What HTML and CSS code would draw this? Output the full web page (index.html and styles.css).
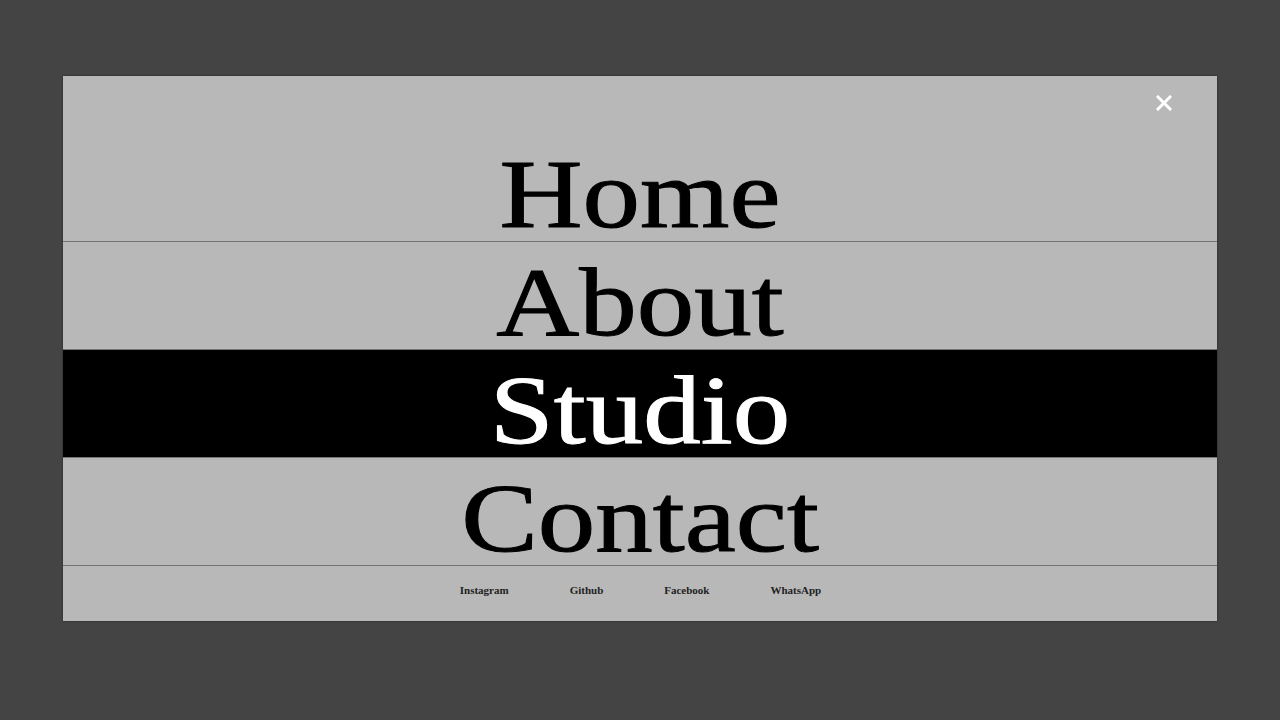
FILE: index.html
```html
<!DOCTYPE html>
<html lang="en">
<head>
<meta charset="utf-8">
<title>Menu</title>
<link rel="stylesheet" href="styles.css">
</head>
<body>
<div class="panel">
  <button class="close" aria-label="Close">
    <svg width="16" height="16" viewBox="0 0 16 16"><path d="M2 2 L14 14 M14 2 L2 14" stroke="#fff" stroke-width="3" stroke-linecap="square" fill="none"/></svg>
  </button>
  <ul class="menu">
    <li class="item"><a href="#">Home</a></li>
    <li class="item"><a href="#">About</a></li>
    <li class="item active"><a href="#">Studio</a></li>
    <li class="item"><a href="#">Contact</a></li>
  </ul>
  <div class="social">
    <a href="#">Instagram</a>
    <a href="#">Github</a>
    <a href="#">Facebook</a>
    <a href="#">WhatsApp</a>
  </div>
</div>
</body>
</html>
```
FILE: styles.css
```css
html, body {
  margin: 0;
  padding: 0;
  background: #444444;
  height: 100%;
}
body {
  font-family: "Liberation Serif", "Times New Roman", serif;
}
.panel {
  position: relative;
  box-sizing: border-box;
  width: 1154px;
  height: 545px;
  margin: 76px 0 0 63px;
  background: #b8b8b8;
  box-shadow: 0 0 2px rgba(0,0,0,0.5);
  padding-top: 58px;
}
.close {
  position: absolute;
  top: 19px;
  right: 45px;
  width: 16px;
  height: 16px;
  padding: 0;
  border: 0;
  background: none;
  display: flex;
}
.menu {
  list-style: none;
  margin: 0;
  padding: 0;
}
.item {
  text-align: center;
  font-size: 115px;
  line-height: 92px;
  height: 92px;
  padding-top: 15px;
  border-bottom: 1px solid #747474;
}
.item a {
  display: inline-block;
  color: #000;
  text-decoration: none;
  -webkit-text-stroke: 1.2px #000;
  transform: scaleY(0.855);
  transform-origin: 50% 50%;
}
.item.active {
  background: #000;
}
.item.active a {
  color: #fff;
  -webkit-text-stroke: 1.2px #fff;
}
.social {
  display: flex;
  justify-content: center;
  gap: 61px;
  padding-top: 17px;
  padding-left: 1px;
}
.social a {
  font-size: 11px;
  line-height: 14px;
  font-weight: bold;
  color: #222;
  text-decoration: none;
}
```
